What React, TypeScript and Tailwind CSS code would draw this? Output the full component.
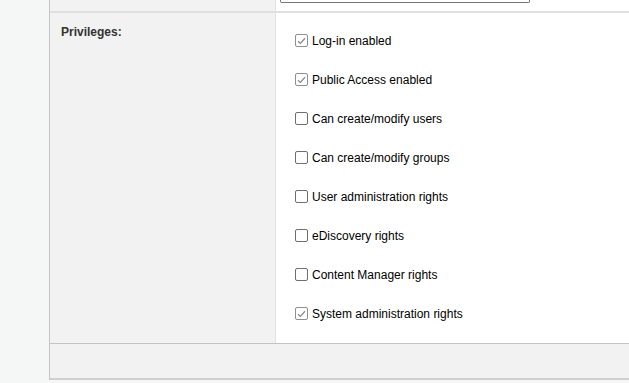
const privileges: { label: string; checked: boolean }[] = [
  { label: "Log-in enabled", checked: true },
  { label: "Public Access enabled", checked: true },
  { label: "Can create/modify users", checked: false },
  { label: "Can create/modify groups", checked: false },
  { label: "User administration rights", checked: false },
  { label: "eDiscovery rights", checked: false },
  { label: "Content Manager rights", checked: false },
  { label: "System administration rights", checked: true },
];

function Box({ checked }: { checked: boolean }) {
  return (
    <span
      className={
        "flex h-[13px] w-[13px] shrink-0 items-center justify-center rounded-[2px] border bg-white " +
        (checked ? "border-[#8f8f8f]" : "border-[#6f6f6f]")
      }
    >
      {checked && (
        <svg width="9" height="8" viewBox="0 0 9 8" fill="none">
          <path d="M1 4.2 L3.4 6.4 L8 1.2" stroke="#8a8a8a" strokeWidth="1.3" />
        </svg>
      )}
    </span>
  );
}

export default function App() {
  return (
    <div className="h-[383px] w-[629px] overflow-hidden bg-[#f5f7f7] pl-[49px] font-['Liberation_Sans',Arial,sans-serif] text-[12px]">
      <div className="border-l border-[#c6c6c6]">
        <div className="flex h-[11px]">
          <div className="w-[226px] shrink-0 border-r border-[#e2e2e2] bg-[#f2f2f2]" />
          <div className="flex-1 bg-white pl-[4px]">
            <div className="h-[3px] w-[250px] rounded-b-[2px] border border-t-0 border-[#767676]" />
          </div>
        </div>
        <div className="h-[2px] bg-[#e0e0e0]" />
        <div className="flex border-b border-[#c4c4c4]">
          <div className="w-[226px] shrink-0 border-r border-[#e2e2e2] bg-[#f2f2f2] pl-[11px] pt-[10px] font-bold text-[#333]">
            Privileges:
          </div>
          <div className="flex-1 bg-white pl-[19px] pt-[8px] pb-[10px]">
            {privileges.map((p) => (
              <div key={p.label} className="flex h-[39px] items-center gap-[4px] text-black">
                <Box checked={p.checked} />
                <span>{p.label}</span>
              </div>
            ))}
          </div>
        </div>
        <div className="h-[36px] border-b-2 border-[#cfcfcf] bg-[#f2f2f2]" />
      </div>
    </div>
  );
}
